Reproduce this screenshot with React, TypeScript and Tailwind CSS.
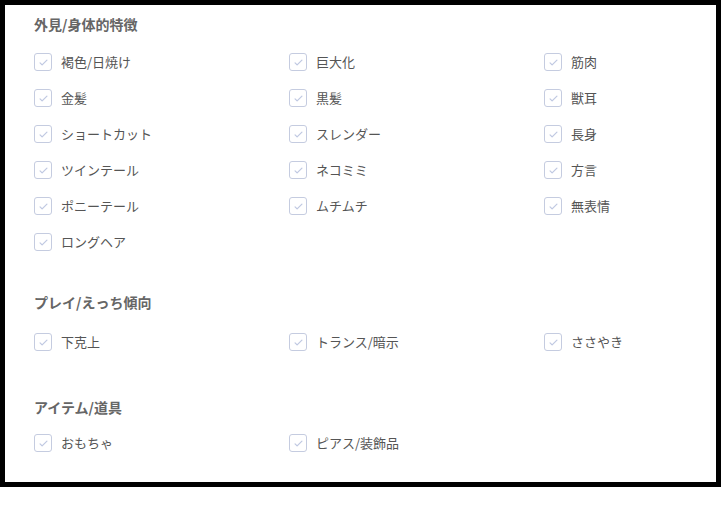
import React from 'react';

type Section = { title: string; items: string[]; gapTop: string; gapBottom: string };

const sections: Section[] = [
  {
    title: '外見/身体的特徴',
    gapTop: 'mt-0',
    gapBottom: 'mb-2',
    items: [
      '褐色/日焼け', '巨大化', '筋肉',
      '金髪', '黒髪', '獣耳',
      'ショートカット', 'スレンダー', '長身',
      'ツインテール', 'ネコミミ', '方言',
      'ポニーテール', 'ムチムチ', '無表情',
      'ロングヘア',
    ],
  },
  { title: 'プレイ/えっち傾向', gapTop: 'mt-[30px]', gapBottom: 'mb-2.5', items: ['下克上', 'トランス/暗示', 'ささやき'] },
  { title: 'アイテム/道具', gapTop: 'mt-[35px]', gapBottom: 'mb-1.5', items: ['おもちゃ', 'ピアス/装飾品'] },
];

function CheckBox() {
  return (
    <span className="flex h-[18px] w-[18px] shrink-0 items-center justify-center rounded-[3px] border border-[#c5cce0] bg-white">
      <svg viewBox="0 0 16 16" className="h-[11px] w-[11px]" fill="none">
        <path d="M3 8.5l3 3 7-7" stroke="#c0c9e2" strokeWidth="1.8" strokeLinecap="round" strokeLinejoin="round" />
      </svg>
    </span>
  );
}

export default function App() {
  return (
    <div
      className="h-[487px] w-[721px] border-[5px] border-black bg-white pl-[29px] pt-[7px]"
      style={{ fontFamily: '"Noto Sans CJK JP", "Noto Sans", sans-serif' }}
    >
      {sections.map((s) => (
        <div key={s.title} className={s.gapTop}>
          <h3 className={`${s.gapBottom} flex h-6 items-center text-[14px] font-bold text-[#666666]`}>{s.title}</h3>
          <div className="grid grid-cols-[255px_255px_1fr]">
            {s.items.map((item) => (
              <label key={item} className="flex h-9 items-center gap-[9px] text-[13px] text-[#555555]">
                <CheckBox />
                <span>{item}</span>
              </label>
            ))}
          </div>
        </div>
      ))}
    </div>
  );
}
